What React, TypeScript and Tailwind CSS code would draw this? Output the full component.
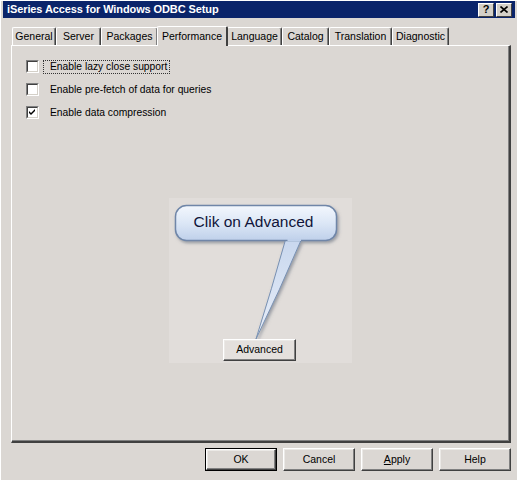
import React from "react";

const font = { fontFamily: '"Liberation Sans", Arial, sans-serif' };

const tabs = [
  { label: "General", w: "w-[44px]" },
  { label: "Server", w: "w-[45px]" },
  { label: "Packages", w: "w-[57px]" },
  { label: "Performance", w: "w-[71px]", active: true },
  { label: "Language", w: "w-[55px]" },
  { label: "Catalog", w: "w-[47px]" },
  { label: "Translation", w: "w-[63px]" },
  { label: "Diagnostic", w: "w-[57px]" },
];

function Checkbox({ checked }: { checked?: boolean }) {
  return (
    <div className="w-[13px] h-[13px] shrink-0 border border-t-[#808080] border-l-[#808080] border-r-white border-b-white">
      <div className="w-full h-full bg-white border border-t-[#404040] border-l-[#404040] border-r-[#d4d0c8] border-b-[#d4d0c8] flex items-center justify-center">
        {checked && (
          <svg width="7" height="7" viewBox="0 0 7 7">
            <path d="M0 2 L2 4 L6 0 L6 2 L2 6 L0 4 Z" fill="#000" />
          </svg>
        )}
      </div>
    </div>
  );
}

function ClassicButton({
  children,
  isDefault,
  className = "",
}: {
  children: React.ReactNode;
  isDefault?: boolean;
  className?: string;
}) {
  const inner = (
    <div className="w-full h-full flex items-center justify-center border border-t-white border-l-white border-r-[#404040] border-b-[#404040] shadow-[inset_-1px_-1px_#808080,inset_1px_1px_#ebe9e6] text-[10.5px] text-black">
      {children}
    </div>
  );
  if (isDefault) {
    return <div className={`border border-black ${className}`}>{inner}</div>;
  }
  return <div className={className}>{inner}</div>;
}

function Callout() {
  return (
    <div className="absolute left-[157px] top-[152px] w-[183px] h-[165px] bg-[#e1dddA]">
      <svg width="183" height="165" viewBox="0 0 183 165" className="absolute left-0 top-0">
        <defs>
          <linearGradient id="bubbleFill" x1="0" y1="0" x2="0" y2="1">
            <stop offset="0" stopColor="#f3f7fd" />
            <stop offset="0.5" stopColor="#dce7f6" />
            <stop offset="1" stopColor="#bfd0ea" />
          </linearGradient>
          <linearGradient id="tailFill" x1="0" y1="0" x2="0" y2="1">
            <stop offset="0" stopColor="#c8d7ee" />
            <stop offset="1" stopColor="#e8eef8" />
          </linearGradient>
          <filter id="soft" x="-20%" y="-20%" width="140%" height="150%">
            <feDropShadow dx="1.5" dy="2" stdDeviation="1.6" floodColor="#50586a" floodOpacity="0.5" />
          </filter>
        </defs>
        <g filter="url(#soft)">
          <path
            d="M117 40 Q103 90 87 141 Q111 92 133 40 Z"
            fill="url(#tailFill)"
            stroke="#7890b2"
            strokeWidth="1"
          />
          <rect x="6.5" y="7.5" width="161" height="35" rx="11" fill="url(#bubbleFill)" stroke="#6f86a8" strokeWidth="1.5" />
          <path d="M118.5 42 L132 42" stroke="#bfd0ea" strokeWidth="2" />
        </g>
      </svg>
      <div
        className="absolute left-[4px] top-[6px] w-[161px] h-[35px] flex items-center justify-center text-[15.5px] text-[#10143a]"
        style={font}
      >
        Clik on Advanced
      </div>
    </div>
  );
}

export default function App() {
  return (
    <div
      className="w-[517px] h-[480px] bg-[#dbd7d3] border-t border-l border-white flex flex-col overflow-hidden select-none"
      style={font}
    >
      {/* title bar */}
      <div className="mx-[2px] h-[17px] bg-[#0a246a] flex items-center pl-[4px] pr-[3px]">
        <span className="text-white font-bold text-[11px] tracking-[-0.1px] flex-1">
          iSeries Access for Windows ODBC Setup
        </span>
        <div className="flex gap-[2px]">
          <div className="w-[16px] h-[14px] bg-[#d4d0c8] border border-t-white border-l-white border-r-[#404040] border-b-[#404040] flex items-center justify-center text-[11px] font-bold leading-none text-black">
            ?
          </div>
          <div className="w-[16px] h-[14px] bg-[#d4d0c8] border border-t-white border-l-white border-r-[#404040] border-b-[#404040] flex items-center justify-center">
            <svg width="8" height="7" viewBox="0 0 8 7">
              <path d="M0.5 0.5 L7.5 6.5 M7.5 0.5 L0.5 6.5" stroke="#000" strokeWidth="1.6" />
            </svg>
          </div>
        </div>
      </div>

      {/* tab strip */}
      <div className="mt-[8px] pl-[11px] h-[19px] flex items-end">
        {tabs.map((t) =>
          t.active ? (
            <div
              key={t.label}
              className={`${t.w} h-[20px] -mx-[1px] relative z-10 bg-[#dbd7d3] border-l border-t border-white border-r-2 border-r-[#404040] rounded-t-[2px] flex items-start justify-center pt-[2px] text-[10.5px] text-black mb-[-1px]`}
            >
              {t.label}
            </div>
          ) : (
            <div
              key={t.label}
              className={`${t.w} h-[18px] border-l border-t border-white border-r border-r-[#404040] shadow-[inset_-1px_0_#808080] rounded-t-[2px] flex items-center justify-center pt-[1px] text-[10.5px] text-black`}
            >
              {t.label}
            </div>
          )
        )}
      </div>

      {/* page */}
      <div className="ml-[10px] mr-[6px] h-[398px] relative border-l border-t border-white border-r-2 border-b-2 border-r-[#404040] border-b-[#404040] shadow-[inset_-1px_-1px_#808080]">
        <div className="pt-[9px] pl-[14px] flex flex-col">
          <div className="h-[23px] flex items-center">
            <Checkbox />
            <span className="ml-[4px] pl-[6px] pr-[2px] h-[14px] flex items-center border border-dotted border-[#333] text-[10.3px] text-black">
              Enable lazy close support
            </span>
          </div>
          <div className="h-[23px] flex items-center">
            <Checkbox />
            <span className="ml-[4px] pl-[6px] pr-[2px] h-[14px] flex items-center border border-transparent text-[10.3px] text-black">
              Enable pre-fetch of data for queries
            </span>
          </div>
          <div className="h-[23px] flex items-center">
            <Checkbox checked />
            <span className="ml-[4px] pl-[6px] pr-[2px] h-[14px] flex items-center border border-transparent text-[10.3px] text-black">
              Enable data compression
            </span>
          </div>
        </div>

        <Callout />

        <div className="relative z-10 mt-[215px] ml-[211px]">
          <ClassicButton className="w-[73px] h-[22px] bg-[#e4e0dd]">Advanced</ClassicButton>
        </div>
      </div>

      {/* dialog buttons */}
      <div className="mt-[5px] mr-[6px] flex justify-end gap-[6px]">
        <ClassicButton isDefault className="w-[72px] h-[23px]">
          OK
        </ClassicButton>
        <ClassicButton className="w-[72px] h-[23px]">Cancel</ClassicButton>
        <ClassicButton className="w-[72px] h-[23px]">
          <span>
            <span className="underline">A</span>pply
          </span>
        </ClassicButton>
        <ClassicButton className="w-[72px] h-[23px]">Help</ClassicButton>
      </div>
    </div>
  );
}
